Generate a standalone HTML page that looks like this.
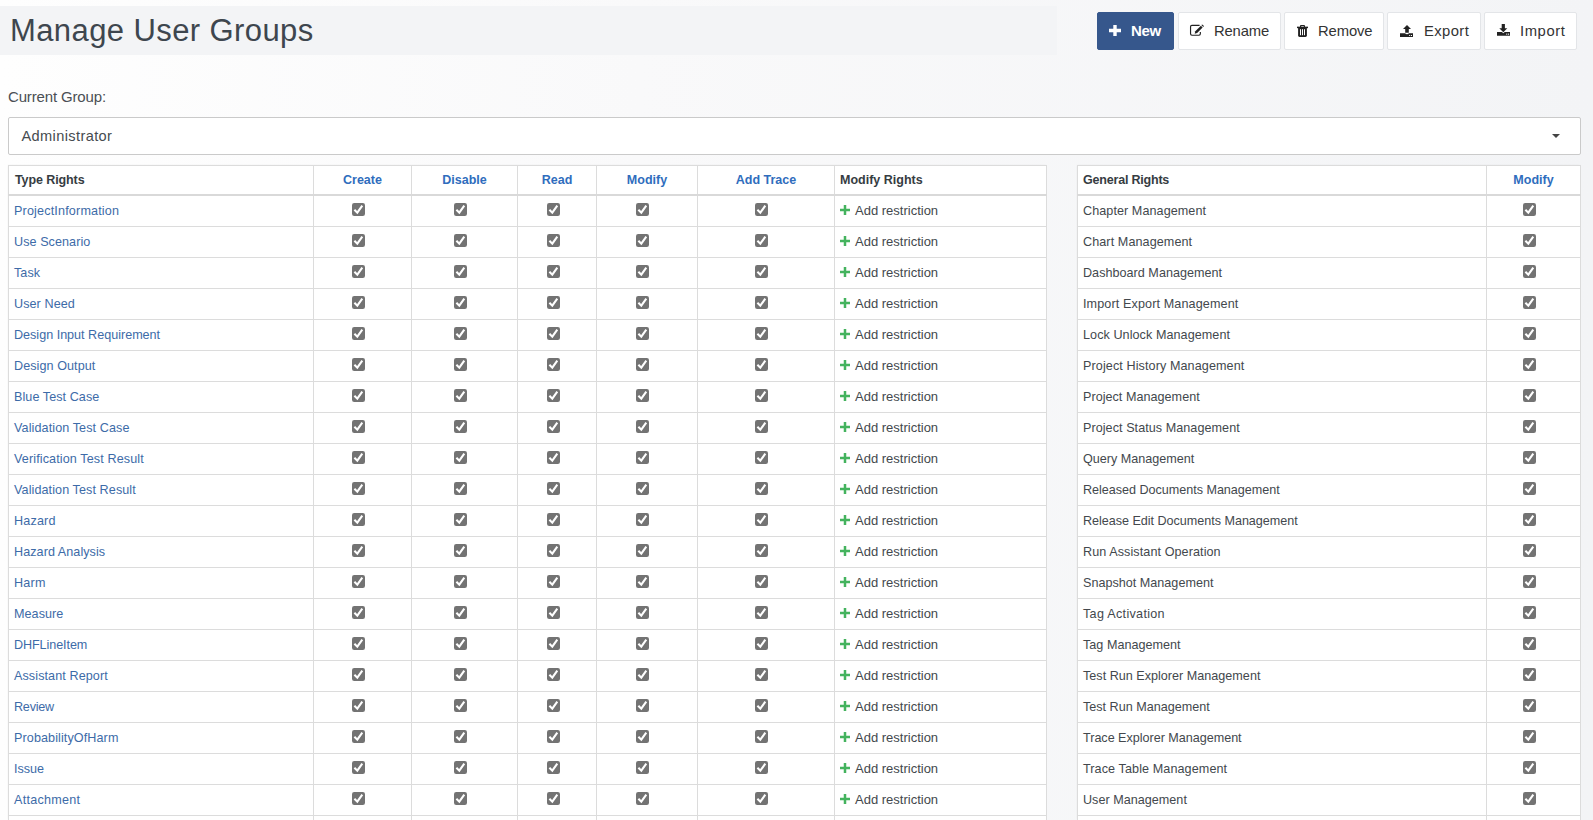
<!DOCTYPE html>
<html><head><meta charset="utf-8"><style>
html,body{margin:0;padding:0;}
body{width:1593px;height:820px;overflow:hidden;position:relative;font-family:"Liberation Sans",sans-serif;background:linear-gradient(to right,#fefefe 0%,#f9f9fa 40%,#f3f4f6 100%);}
.ab{position:absolute;line-height:0;}
.t{position:absolute;white-space:nowrap;line-height:20px;}
.bl{position:absolute;background:#dcdcdc;}
.bh{position:absolute;background:#d9d9d9;}
.tbg{position:absolute;background:#fff;box-shadow:0 0 2px rgba(0,0,0,0.05);}
.hd{font-size:12.5px;font-weight:bold;color:#363c42;}
.hl{font-size:12.5px;font-weight:bold;color:#2f6dbd;}
.lk{font-size:12.6px;color:#3d6ba8;}
.tx{font-size:12.6px;color:#43484d;}
.ar{font-size:13px;color:#43484d;}
.band{position:absolute;left:0;top:6px;width:1057px;height:49px;background:#f3f4f6;}
.title{position:absolute;left:10px;top:12px;font-size:31px;letter-spacing:0.4px;line-height:38px;color:#3e464e;white-space:nowrap;}
.btn{position:absolute;top:12px;height:36px;border:1px solid #e3e5e8;border-radius:2px;background:#fff;}
.btn .lb{position:absolute;top:9px;font-size:14.8px;line-height:18px;color:#333;white-space:nowrap;}
.btn .ic{position:absolute;line-height:0;}
.new{background:#36578c;border-color:#36578c;}
.lbl{position:absolute;left:8px;top:88px;font-size:15px;letter-spacing:-0.15px;line-height:18px;color:#4a4f54;white-space:nowrap;}
.sel{position:absolute;left:8px;top:117px;width:1571px;height:36px;border:1px solid #cacaca;border-radius:2px;background:#fff;}
.sel .v{position:absolute;left:12.5px;top:9px;font-size:14.6px;line-height:18px;color:#464b50;letter-spacing:0.37px;white-space:nowrap;}
.caret{position:absolute;left:1543px;top:16px;width:0;height:0;border-left:4px solid transparent;border-right:4px solid transparent;border-top:4px solid #444;}
</style></head><body>
<div class="band"></div>
<div class="title">Manage User Groups</div>
<div class="btn new" style="left:1097px;width:75px"><div class="ic" style="left:11px;top:12px"><svg width="12" height="11" viewBox="0 0 12 11"><path d="M4.3 0h3.4v3.8H12v3.4H7.7V11H4.3V7.2H0V3.8h4.3z" fill="#fff"/></svg></div><div class="lb" style="left:33px;color:#fff;font-weight:bold;font-size:15px;letter-spacing:-0.3px">New</div></div>
<div class="btn" style="left:1178px;width:101px"><div class="ic" style="left:6px;top:5px"><svg width="30" height="26" viewBox="0 0 30 26"><path d="M14.6 7.35H6.9Q5.55 7.35 5.55 8.7V15.85Q5.55 17.2 6.9 17.2H14Q15.35 17.2 15.35 15.85V14" stroke="#222" stroke-width="1.15" fill="none"/><path d="M9.7 15.7L10.3 13.2L15.9 7.7L17.6 9.4L12.1 15z" fill="#222"/><path d="M16.4 7.1L17.2 6.4L19 8.1L18.2 8.9z" fill="#222"/></svg></div><div class="lb" style="left:35px;letter-spacing:-0.150px">Rename</div></div>
<div class="btn" style="left:1284px;width:98px"><div class="ic" style="left:12px;top:12px"><svg width="12" height="12" viewBox="0 0 12 12"><path d="M0 2.4h11" stroke="#222" stroke-width="1.5"/><path d="M3.6 2.4V1.3Q3.6.4 4.5.4h2Q7.4.4 7.4 1.3v1.1" stroke="#222" stroke-width="1.2" fill="none"/><path d="M1.1 3h8.8v7.6Q9.9 12 8.5 12h-6Q1.1 12 1.1 10.6z" fill="#222"/><rect x="3" y="4.2" width="1" height="6" fill="#fff"/><rect x="5" y="4.2" width="1" height="6" fill="#fff"/><rect x="7" y="4.2" width="1" height="6" fill="#fff"/></svg></div><div class="lb" style="left:33px;letter-spacing:-0.100px">Remove</div></div>
<div class="btn" style="left:1387px;width:92px"><div class="ic" style="left:12px;top:12px"><svg width="14" height="13" viewBox="0 0 14 13"><path d="M7 0L11 4H8.8V7.8H5.2V4H3z" fill="#222"/><path d="M0 8.3H5.2V8.6Q7 9.8 8.8 8.6V8.3H13V12H0z" fill="#222"/><rect x="9.2" y="10" width="1" height="1" fill="#fff"/><rect x="11" y="10" width="1" height="1" fill="#fff"/></svg></div><div class="lb" style="left:36px;letter-spacing:0.400px">Export</div></div>
<div class="btn" style="left:1484px;width:91px"><div class="ic" style="left:12px;top:11px"><svg width="14" height="12" viewBox="0 0 14 12"><path d="M4.7 0H7.9V4.2H10.3L6.3 8.2 2.3 4.2H4.7z" fill="#222"/><path d="M0 8H4.9L6.3 9.2 7.7 8H13V11.8H0z" fill="#222"/><rect x="9.2" y="9.6" width="1.1" height="1.1" fill="#fff"/><rect x="11" y="9.6" width="1.1" height="1.1" fill="#fff"/></svg></div><div class="lb" style="left:35px;letter-spacing:0.580px">Import</div></div>
<div class="lbl">Current Group:</div>
<div class="sel"><div class="v">Administrator</div><div class="caret"></div></div>
<div class="tbg" style="left:8px;top:165px;width:1038px;height:655px"></div>
<div class="tbg" style="left:1077px;top:165px;width:503px;height:655px"></div>
<div class="bl" style="left:8px;top:165px;width:1px;height:655px"></div>
<div class="bl" style="left:313px;top:165px;width:1px;height:655px"></div>
<div class="bl" style="left:411px;top:165px;width:1px;height:655px"></div>
<div class="bl" style="left:517px;top:165px;width:1px;height:655px"></div>
<div class="bl" style="left:596px;top:165px;width:1px;height:655px"></div>
<div class="bl" style="left:697px;top:165px;width:1px;height:655px"></div>
<div class="bl" style="left:834px;top:165px;width:1px;height:655px"></div>
<div class="bl" style="left:1046px;top:165px;width:1px;height:655px"></div>
<div class="bl" style="left:1077px;top:165px;width:1px;height:655px"></div>
<div class="bl" style="left:1486px;top:165px;width:1px;height:655px"></div>
<div class="bl" style="left:1580px;top:165px;width:1px;height:655px"></div>
<div class="bl" style="left:8px;top:165px;width:1039px;height:1px"></div>
<div class="bl" style="left:1077px;top:165px;width:504px;height:1px"></div>
<div class="bh" style="left:8px;top:194px;width:1039px;height:2px"></div>
<div class="bh" style="left:1077px;top:194px;width:504px;height:2px"></div>
<div class="bl" style="left:8px;top:226px;width:1039px;height:1px"></div>
<div class="bl" style="left:1077px;top:226px;width:504px;height:1px"></div>
<div class="bl" style="left:8px;top:257px;width:1039px;height:1px"></div>
<div class="bl" style="left:1077px;top:257px;width:504px;height:1px"></div>
<div class="bl" style="left:8px;top:288px;width:1039px;height:1px"></div>
<div class="bl" style="left:1077px;top:288px;width:504px;height:1px"></div>
<div class="bl" style="left:8px;top:319px;width:1039px;height:1px"></div>
<div class="bl" style="left:1077px;top:319px;width:504px;height:1px"></div>
<div class="bl" style="left:8px;top:350px;width:1039px;height:1px"></div>
<div class="bl" style="left:1077px;top:350px;width:504px;height:1px"></div>
<div class="bl" style="left:8px;top:381px;width:1039px;height:1px"></div>
<div class="bl" style="left:1077px;top:381px;width:504px;height:1px"></div>
<div class="bl" style="left:8px;top:412px;width:1039px;height:1px"></div>
<div class="bl" style="left:1077px;top:412px;width:504px;height:1px"></div>
<div class="bl" style="left:8px;top:443px;width:1039px;height:1px"></div>
<div class="bl" style="left:1077px;top:443px;width:504px;height:1px"></div>
<div class="bl" style="left:8px;top:474px;width:1039px;height:1px"></div>
<div class="bl" style="left:1077px;top:474px;width:504px;height:1px"></div>
<div class="bl" style="left:8px;top:505px;width:1039px;height:1px"></div>
<div class="bl" style="left:1077px;top:505px;width:504px;height:1px"></div>
<div class="bl" style="left:8px;top:536px;width:1039px;height:1px"></div>
<div class="bl" style="left:1077px;top:536px;width:504px;height:1px"></div>
<div class="bl" style="left:8px;top:567px;width:1039px;height:1px"></div>
<div class="bl" style="left:1077px;top:567px;width:504px;height:1px"></div>
<div class="bl" style="left:8px;top:598px;width:1039px;height:1px"></div>
<div class="bl" style="left:1077px;top:598px;width:504px;height:1px"></div>
<div class="bl" style="left:8px;top:629px;width:1039px;height:1px"></div>
<div class="bl" style="left:1077px;top:629px;width:504px;height:1px"></div>
<div class="bl" style="left:8px;top:660px;width:1039px;height:1px"></div>
<div class="bl" style="left:1077px;top:660px;width:504px;height:1px"></div>
<div class="bl" style="left:8px;top:691px;width:1039px;height:1px"></div>
<div class="bl" style="left:1077px;top:691px;width:504px;height:1px"></div>
<div class="bl" style="left:8px;top:722px;width:1039px;height:1px"></div>
<div class="bl" style="left:1077px;top:722px;width:504px;height:1px"></div>
<div class="bl" style="left:8px;top:753px;width:1039px;height:1px"></div>
<div class="bl" style="left:1077px;top:753px;width:504px;height:1px"></div>
<div class="bl" style="left:8px;top:784px;width:1039px;height:1px"></div>
<div class="bl" style="left:1077px;top:784px;width:504px;height:1px"></div>
<div class="bl" style="left:8px;top:815px;width:1039px;height:1px"></div>
<div class="bl" style="left:1077px;top:815px;width:504px;height:1px"></div>
<div class="t hd" style="left:15px;top:170px"><span style='letter-spacing:-0.1px'>Type Rights</span></div>
<div class="t hl" style="left:314px;top:170px;width:97px;text-align:center">Create</div>
<div class="t hl" style="left:412px;top:170px;width:105px;text-align:center">Disable</div>
<div class="t hl" style="left:518px;top:170px;width:78px;text-align:center">Read</div>
<div class="t hl" style="left:597px;top:170px;width:100px;text-align:center">Modify</div>
<div class="t hl" style="left:698px;top:170px;width:136px;text-align:center">Add Trace</div>
<div class="t hd" style="left:840px;top:170px">Modify Rights</div>
<div class="t hd" style="left:1083px;top:170px"><span style='letter-spacing:-0.2px'>General Rights</span></div>
<div class="t hl" style="left:1487px;top:170px;width:93px;text-align:center">Modify</div>
<div class="t lk" style="left:14px;top:201px"><span style='letter-spacing:0.165px'>ProjectInformation</span></div>
<div class="ab" style="left:352px;top:203px"><svg class="cb" width="13" height="13" viewBox="0 0 13 13"><rect x="0" y="0" width="13" height="13" rx="2.2" fill="#737373"/><path d="M2.4 6.8 L5.3 9.7 L10.3 2.7" stroke="#fff" stroke-width="2.1" fill="none" stroke-linecap="butt" stroke-linejoin="miter"/></svg></div>
<div class="ab" style="left:454px;top:203px"><svg class="cb" width="13" height="13" viewBox="0 0 13 13"><rect x="0" y="0" width="13" height="13" rx="2.2" fill="#737373"/><path d="M2.4 6.8 L5.3 9.7 L10.3 2.7" stroke="#fff" stroke-width="2.1" fill="none" stroke-linecap="butt" stroke-linejoin="miter"/></svg></div>
<div class="ab" style="left:547px;top:203px"><svg class="cb" width="13" height="13" viewBox="0 0 13 13"><rect x="0" y="0" width="13" height="13" rx="2.2" fill="#737373"/><path d="M2.4 6.8 L5.3 9.7 L10.3 2.7" stroke="#fff" stroke-width="2.1" fill="none" stroke-linecap="butt" stroke-linejoin="miter"/></svg></div>
<div class="ab" style="left:636px;top:203px"><svg class="cb" width="13" height="13" viewBox="0 0 13 13"><rect x="0" y="0" width="13" height="13" rx="2.2" fill="#737373"/><path d="M2.4 6.8 L5.3 9.7 L10.3 2.7" stroke="#fff" stroke-width="2.1" fill="none" stroke-linecap="butt" stroke-linejoin="miter"/></svg></div>
<div class="ab" style="left:755px;top:203px"><svg class="cb" width="13" height="13" viewBox="0 0 13 13"><rect x="0" y="0" width="13" height="13" rx="2.2" fill="#737373"/><path d="M2.4 6.8 L5.3 9.7 L10.3 2.7" stroke="#fff" stroke-width="2.1" fill="none" stroke-linecap="butt" stroke-linejoin="miter"/></svg></div>
<div class="ab" style="left:840px;top:205px"><svg class="pl" width="10" height="10" viewBox="0 0 10 10"><path d="M3.75 0h2.5v3.75H10v2.5H6.25V10H3.75V6.25H0V3.75h3.75z" fill="#44b35e"/></svg></div>
<div class="t ar" style="left:855px;top:201px">Add restriction</div>
<div class="t tx" style="left:1083px;top:201px"><span style='letter-spacing:0.071px'>Chapter Management</span></div>
<div class="ab" style="left:1523px;top:203px"><svg class="cb" width="13" height="13" viewBox="0 0 13 13"><rect x="0" y="0" width="13" height="13" rx="2.2" fill="#737373"/><path d="M2.4 6.8 L5.3 9.7 L10.3 2.7" stroke="#fff" stroke-width="2.1" fill="none" stroke-linecap="butt" stroke-linejoin="miter"/></svg></div>
<div class="t lk" style="left:14px;top:232px"><span style='letter-spacing:0.064px'>Use Scenario</span></div>
<div class="ab" style="left:352px;top:234px"><svg class="cb" width="13" height="13" viewBox="0 0 13 13"><rect x="0" y="0" width="13" height="13" rx="2.2" fill="#737373"/><path d="M2.4 6.8 L5.3 9.7 L10.3 2.7" stroke="#fff" stroke-width="2.1" fill="none" stroke-linecap="butt" stroke-linejoin="miter"/></svg></div>
<div class="ab" style="left:454px;top:234px"><svg class="cb" width="13" height="13" viewBox="0 0 13 13"><rect x="0" y="0" width="13" height="13" rx="2.2" fill="#737373"/><path d="M2.4 6.8 L5.3 9.7 L10.3 2.7" stroke="#fff" stroke-width="2.1" fill="none" stroke-linecap="butt" stroke-linejoin="miter"/></svg></div>
<div class="ab" style="left:547px;top:234px"><svg class="cb" width="13" height="13" viewBox="0 0 13 13"><rect x="0" y="0" width="13" height="13" rx="2.2" fill="#737373"/><path d="M2.4 6.8 L5.3 9.7 L10.3 2.7" stroke="#fff" stroke-width="2.1" fill="none" stroke-linecap="butt" stroke-linejoin="miter"/></svg></div>
<div class="ab" style="left:636px;top:234px"><svg class="cb" width="13" height="13" viewBox="0 0 13 13"><rect x="0" y="0" width="13" height="13" rx="2.2" fill="#737373"/><path d="M2.4 6.8 L5.3 9.7 L10.3 2.7" stroke="#fff" stroke-width="2.1" fill="none" stroke-linecap="butt" stroke-linejoin="miter"/></svg></div>
<div class="ab" style="left:755px;top:234px"><svg class="cb" width="13" height="13" viewBox="0 0 13 13"><rect x="0" y="0" width="13" height="13" rx="2.2" fill="#737373"/><path d="M2.4 6.8 L5.3 9.7 L10.3 2.7" stroke="#fff" stroke-width="2.1" fill="none" stroke-linecap="butt" stroke-linejoin="miter"/></svg></div>
<div class="ab" style="left:840px;top:236px"><svg class="pl" width="10" height="10" viewBox="0 0 10 10"><path d="M3.75 0h2.5v3.75H10v2.5H6.25V10H3.75V6.25H0V3.75h3.75z" fill="#44b35e"/></svg></div>
<div class="t ar" style="left:855px;top:232px">Add restriction</div>
<div class="t tx" style="left:1083px;top:232px"><span style='letter-spacing:0.087px'>Chart Management</span></div>
<div class="ab" style="left:1523px;top:234px"><svg class="cb" width="13" height="13" viewBox="0 0 13 13"><rect x="0" y="0" width="13" height="13" rx="2.2" fill="#737373"/><path d="M2.4 6.8 L5.3 9.7 L10.3 2.7" stroke="#fff" stroke-width="2.1" fill="none" stroke-linecap="butt" stroke-linejoin="miter"/></svg></div>
<div class="t lk" style="left:14px;top:263px"><span style='letter-spacing:0.067px'>Task</span></div>
<div class="ab" style="left:352px;top:265px"><svg class="cb" width="13" height="13" viewBox="0 0 13 13"><rect x="0" y="0" width="13" height="13" rx="2.2" fill="#737373"/><path d="M2.4 6.8 L5.3 9.7 L10.3 2.7" stroke="#fff" stroke-width="2.1" fill="none" stroke-linecap="butt" stroke-linejoin="miter"/></svg></div>
<div class="ab" style="left:454px;top:265px"><svg class="cb" width="13" height="13" viewBox="0 0 13 13"><rect x="0" y="0" width="13" height="13" rx="2.2" fill="#737373"/><path d="M2.4 6.8 L5.3 9.7 L10.3 2.7" stroke="#fff" stroke-width="2.1" fill="none" stroke-linecap="butt" stroke-linejoin="miter"/></svg></div>
<div class="ab" style="left:547px;top:265px"><svg class="cb" width="13" height="13" viewBox="0 0 13 13"><rect x="0" y="0" width="13" height="13" rx="2.2" fill="#737373"/><path d="M2.4 6.8 L5.3 9.7 L10.3 2.7" stroke="#fff" stroke-width="2.1" fill="none" stroke-linecap="butt" stroke-linejoin="miter"/></svg></div>
<div class="ab" style="left:636px;top:265px"><svg class="cb" width="13" height="13" viewBox="0 0 13 13"><rect x="0" y="0" width="13" height="13" rx="2.2" fill="#737373"/><path d="M2.4 6.8 L5.3 9.7 L10.3 2.7" stroke="#fff" stroke-width="2.1" fill="none" stroke-linecap="butt" stroke-linejoin="miter"/></svg></div>
<div class="ab" style="left:755px;top:265px"><svg class="cb" width="13" height="13" viewBox="0 0 13 13"><rect x="0" y="0" width="13" height="13" rx="2.2" fill="#737373"/><path d="M2.4 6.8 L5.3 9.7 L10.3 2.7" stroke="#fff" stroke-width="2.1" fill="none" stroke-linecap="butt" stroke-linejoin="miter"/></svg></div>
<div class="ab" style="left:840px;top:267px"><svg class="pl" width="10" height="10" viewBox="0 0 10 10"><path d="M3.75 0h2.5v3.75H10v2.5H6.25V10H3.75V6.25H0V3.75h3.75z" fill="#44b35e"/></svg></div>
<div class="t ar" style="left:855px;top:263px">Add restriction</div>
<div class="t tx" style="left:1083px;top:263px"><span style='letter-spacing:0.026px'>Dashboard Management</span></div>
<div class="ab" style="left:1523px;top:265px"><svg class="cb" width="13" height="13" viewBox="0 0 13 13"><rect x="0" y="0" width="13" height="13" rx="2.2" fill="#737373"/><path d="M2.4 6.8 L5.3 9.7 L10.3 2.7" stroke="#fff" stroke-width="2.1" fill="none" stroke-linecap="butt" stroke-linejoin="miter"/></svg></div>
<div class="t lk" style="left:14px;top:294px"><span style='letter-spacing:0.075px'>User Need</span></div>
<div class="ab" style="left:352px;top:296px"><svg class="cb" width="13" height="13" viewBox="0 0 13 13"><rect x="0" y="0" width="13" height="13" rx="2.2" fill="#737373"/><path d="M2.4 6.8 L5.3 9.7 L10.3 2.7" stroke="#fff" stroke-width="2.1" fill="none" stroke-linecap="butt" stroke-linejoin="miter"/></svg></div>
<div class="ab" style="left:454px;top:296px"><svg class="cb" width="13" height="13" viewBox="0 0 13 13"><rect x="0" y="0" width="13" height="13" rx="2.2" fill="#737373"/><path d="M2.4 6.8 L5.3 9.7 L10.3 2.7" stroke="#fff" stroke-width="2.1" fill="none" stroke-linecap="butt" stroke-linejoin="miter"/></svg></div>
<div class="ab" style="left:547px;top:296px"><svg class="cb" width="13" height="13" viewBox="0 0 13 13"><rect x="0" y="0" width="13" height="13" rx="2.2" fill="#737373"/><path d="M2.4 6.8 L5.3 9.7 L10.3 2.7" stroke="#fff" stroke-width="2.1" fill="none" stroke-linecap="butt" stroke-linejoin="miter"/></svg></div>
<div class="ab" style="left:636px;top:296px"><svg class="cb" width="13" height="13" viewBox="0 0 13 13"><rect x="0" y="0" width="13" height="13" rx="2.2" fill="#737373"/><path d="M2.4 6.8 L5.3 9.7 L10.3 2.7" stroke="#fff" stroke-width="2.1" fill="none" stroke-linecap="butt" stroke-linejoin="miter"/></svg></div>
<div class="ab" style="left:755px;top:296px"><svg class="cb" width="13" height="13" viewBox="0 0 13 13"><rect x="0" y="0" width="13" height="13" rx="2.2" fill="#737373"/><path d="M2.4 6.8 L5.3 9.7 L10.3 2.7" stroke="#fff" stroke-width="2.1" fill="none" stroke-linecap="butt" stroke-linejoin="miter"/></svg></div>
<div class="ab" style="left:840px;top:298px"><svg class="pl" width="10" height="10" viewBox="0 0 10 10"><path d="M3.75 0h2.5v3.75H10v2.5H6.25V10H3.75V6.25H0V3.75h3.75z" fill="#44b35e"/></svg></div>
<div class="t ar" style="left:855px;top:294px">Add restriction</div>
<div class="t tx" style="left:1083px;top:294px"><span style='letter-spacing:0.117px'>Import Export Management</span></div>
<div class="ab" style="left:1523px;top:296px"><svg class="cb" width="13" height="13" viewBox="0 0 13 13"><rect x="0" y="0" width="13" height="13" rx="2.2" fill="#737373"/><path d="M2.4 6.8 L5.3 9.7 L10.3 2.7" stroke="#fff" stroke-width="2.1" fill="none" stroke-linecap="butt" stroke-linejoin="miter"/></svg></div>
<div class="t lk" style="left:14px;top:325px"><span style='letter-spacing:-0.009px'>Design Input Requirement</span></div>
<div class="ab" style="left:352px;top:327px"><svg class="cb" width="13" height="13" viewBox="0 0 13 13"><rect x="0" y="0" width="13" height="13" rx="2.2" fill="#737373"/><path d="M2.4 6.8 L5.3 9.7 L10.3 2.7" stroke="#fff" stroke-width="2.1" fill="none" stroke-linecap="butt" stroke-linejoin="miter"/></svg></div>
<div class="ab" style="left:454px;top:327px"><svg class="cb" width="13" height="13" viewBox="0 0 13 13"><rect x="0" y="0" width="13" height="13" rx="2.2" fill="#737373"/><path d="M2.4 6.8 L5.3 9.7 L10.3 2.7" stroke="#fff" stroke-width="2.1" fill="none" stroke-linecap="butt" stroke-linejoin="miter"/></svg></div>
<div class="ab" style="left:547px;top:327px"><svg class="cb" width="13" height="13" viewBox="0 0 13 13"><rect x="0" y="0" width="13" height="13" rx="2.2" fill="#737373"/><path d="M2.4 6.8 L5.3 9.7 L10.3 2.7" stroke="#fff" stroke-width="2.1" fill="none" stroke-linecap="butt" stroke-linejoin="miter"/></svg></div>
<div class="ab" style="left:636px;top:327px"><svg class="cb" width="13" height="13" viewBox="0 0 13 13"><rect x="0" y="0" width="13" height="13" rx="2.2" fill="#737373"/><path d="M2.4 6.8 L5.3 9.7 L10.3 2.7" stroke="#fff" stroke-width="2.1" fill="none" stroke-linecap="butt" stroke-linejoin="miter"/></svg></div>
<div class="ab" style="left:755px;top:327px"><svg class="cb" width="13" height="13" viewBox="0 0 13 13"><rect x="0" y="0" width="13" height="13" rx="2.2" fill="#737373"/><path d="M2.4 6.8 L5.3 9.7 L10.3 2.7" stroke="#fff" stroke-width="2.1" fill="none" stroke-linecap="butt" stroke-linejoin="miter"/></svg></div>
<div class="ab" style="left:840px;top:329px"><svg class="pl" width="10" height="10" viewBox="0 0 10 10"><path d="M3.75 0h2.5v3.75H10v2.5H6.25V10H3.75V6.25H0V3.75h3.75z" fill="#44b35e"/></svg></div>
<div class="t ar" style="left:855px;top:325px">Add restriction</div>
<div class="t tx" style="left:1083px;top:325px"><span style='letter-spacing:0.067px'>Lock Unlock Management</span></div>
<div class="ab" style="left:1523px;top:327px"><svg class="cb" width="13" height="13" viewBox="0 0 13 13"><rect x="0" y="0" width="13" height="13" rx="2.2" fill="#737373"/><path d="M2.4 6.8 L5.3 9.7 L10.3 2.7" stroke="#fff" stroke-width="2.1" fill="none" stroke-linecap="butt" stroke-linejoin="miter"/></svg></div>
<div class="t lk" style="left:14px;top:356px"><span style='letter-spacing:0.067px'>Design Output</span></div>
<div class="ab" style="left:352px;top:358px"><svg class="cb" width="13" height="13" viewBox="0 0 13 13"><rect x="0" y="0" width="13" height="13" rx="2.2" fill="#737373"/><path d="M2.4 6.8 L5.3 9.7 L10.3 2.7" stroke="#fff" stroke-width="2.1" fill="none" stroke-linecap="butt" stroke-linejoin="miter"/></svg></div>
<div class="ab" style="left:454px;top:358px"><svg class="cb" width="13" height="13" viewBox="0 0 13 13"><rect x="0" y="0" width="13" height="13" rx="2.2" fill="#737373"/><path d="M2.4 6.8 L5.3 9.7 L10.3 2.7" stroke="#fff" stroke-width="2.1" fill="none" stroke-linecap="butt" stroke-linejoin="miter"/></svg></div>
<div class="ab" style="left:547px;top:358px"><svg class="cb" width="13" height="13" viewBox="0 0 13 13"><rect x="0" y="0" width="13" height="13" rx="2.2" fill="#737373"/><path d="M2.4 6.8 L5.3 9.7 L10.3 2.7" stroke="#fff" stroke-width="2.1" fill="none" stroke-linecap="butt" stroke-linejoin="miter"/></svg></div>
<div class="ab" style="left:636px;top:358px"><svg class="cb" width="13" height="13" viewBox="0 0 13 13"><rect x="0" y="0" width="13" height="13" rx="2.2" fill="#737373"/><path d="M2.4 6.8 L5.3 9.7 L10.3 2.7" stroke="#fff" stroke-width="2.1" fill="none" stroke-linecap="butt" stroke-linejoin="miter"/></svg></div>
<div class="ab" style="left:755px;top:358px"><svg class="cb" width="13" height="13" viewBox="0 0 13 13"><rect x="0" y="0" width="13" height="13" rx="2.2" fill="#737373"/><path d="M2.4 6.8 L5.3 9.7 L10.3 2.7" stroke="#fff" stroke-width="2.1" fill="none" stroke-linecap="butt" stroke-linejoin="miter"/></svg></div>
<div class="ab" style="left:840px;top:360px"><svg class="pl" width="10" height="10" viewBox="0 0 10 10"><path d="M3.75 0h2.5v3.75H10v2.5H6.25V10H3.75V6.25H0V3.75h3.75z" fill="#44b35e"/></svg></div>
<div class="t ar" style="left:855px;top:356px">Add restriction</div>
<div class="t tx" style="left:1083px;top:356px"><span style='letter-spacing:0.096px'>Project History Management</span></div>
<div class="ab" style="left:1523px;top:358px"><svg class="cb" width="13" height="13" viewBox="0 0 13 13"><rect x="0" y="0" width="13" height="13" rx="2.2" fill="#737373"/><path d="M2.4 6.8 L5.3 9.7 L10.3 2.7" stroke="#fff" stroke-width="2.1" fill="none" stroke-linecap="butt" stroke-linejoin="miter"/></svg></div>
<div class="t lk" style="left:14px;top:387px"><span style='letter-spacing:0.062px'>Blue Test Case</span></div>
<div class="ab" style="left:352px;top:389px"><svg class="cb" width="13" height="13" viewBox="0 0 13 13"><rect x="0" y="0" width="13" height="13" rx="2.2" fill="#737373"/><path d="M2.4 6.8 L5.3 9.7 L10.3 2.7" stroke="#fff" stroke-width="2.1" fill="none" stroke-linecap="butt" stroke-linejoin="miter"/></svg></div>
<div class="ab" style="left:454px;top:389px"><svg class="cb" width="13" height="13" viewBox="0 0 13 13"><rect x="0" y="0" width="13" height="13" rx="2.2" fill="#737373"/><path d="M2.4 6.8 L5.3 9.7 L10.3 2.7" stroke="#fff" stroke-width="2.1" fill="none" stroke-linecap="butt" stroke-linejoin="miter"/></svg></div>
<div class="ab" style="left:547px;top:389px"><svg class="cb" width="13" height="13" viewBox="0 0 13 13"><rect x="0" y="0" width="13" height="13" rx="2.2" fill="#737373"/><path d="M2.4 6.8 L5.3 9.7 L10.3 2.7" stroke="#fff" stroke-width="2.1" fill="none" stroke-linecap="butt" stroke-linejoin="miter"/></svg></div>
<div class="ab" style="left:636px;top:389px"><svg class="cb" width="13" height="13" viewBox="0 0 13 13"><rect x="0" y="0" width="13" height="13" rx="2.2" fill="#737373"/><path d="M2.4 6.8 L5.3 9.7 L10.3 2.7" stroke="#fff" stroke-width="2.1" fill="none" stroke-linecap="butt" stroke-linejoin="miter"/></svg></div>
<div class="ab" style="left:755px;top:389px"><svg class="cb" width="13" height="13" viewBox="0 0 13 13"><rect x="0" y="0" width="13" height="13" rx="2.2" fill="#737373"/><path d="M2.4 6.8 L5.3 9.7 L10.3 2.7" stroke="#fff" stroke-width="2.1" fill="none" stroke-linecap="butt" stroke-linejoin="miter"/></svg></div>
<div class="ab" style="left:840px;top:391px"><svg class="pl" width="10" height="10" viewBox="0 0 10 10"><path d="M3.75 0h2.5v3.75H10v2.5H6.25V10H3.75V6.25H0V3.75h3.75z" fill="#44b35e"/></svg></div>
<div class="t ar" style="left:855px;top:387px">Add restriction</div>
<div class="t tx" style="left:1083px;top:387px"><span style='letter-spacing:0.029px'>Project Management</span></div>
<div class="ab" style="left:1523px;top:389px"><svg class="cb" width="13" height="13" viewBox="0 0 13 13"><rect x="0" y="0" width="13" height="13" rx="2.2" fill="#737373"/><path d="M2.4 6.8 L5.3 9.7 L10.3 2.7" stroke="#fff" stroke-width="2.1" fill="none" stroke-linecap="butt" stroke-linejoin="miter"/></svg></div>
<div class="t lk" style="left:14px;top:418px"><span style='letter-spacing:0.095px'>Validation Test Case</span></div>
<div class="ab" style="left:352px;top:420px"><svg class="cb" width="13" height="13" viewBox="0 0 13 13"><rect x="0" y="0" width="13" height="13" rx="2.2" fill="#737373"/><path d="M2.4 6.8 L5.3 9.7 L10.3 2.7" stroke="#fff" stroke-width="2.1" fill="none" stroke-linecap="butt" stroke-linejoin="miter"/></svg></div>
<div class="ab" style="left:454px;top:420px"><svg class="cb" width="13" height="13" viewBox="0 0 13 13"><rect x="0" y="0" width="13" height="13" rx="2.2" fill="#737373"/><path d="M2.4 6.8 L5.3 9.7 L10.3 2.7" stroke="#fff" stroke-width="2.1" fill="none" stroke-linecap="butt" stroke-linejoin="miter"/></svg></div>
<div class="ab" style="left:547px;top:420px"><svg class="cb" width="13" height="13" viewBox="0 0 13 13"><rect x="0" y="0" width="13" height="13" rx="2.2" fill="#737373"/><path d="M2.4 6.8 L5.3 9.7 L10.3 2.7" stroke="#fff" stroke-width="2.1" fill="none" stroke-linecap="butt" stroke-linejoin="miter"/></svg></div>
<div class="ab" style="left:636px;top:420px"><svg class="cb" width="13" height="13" viewBox="0 0 13 13"><rect x="0" y="0" width="13" height="13" rx="2.2" fill="#737373"/><path d="M2.4 6.8 L5.3 9.7 L10.3 2.7" stroke="#fff" stroke-width="2.1" fill="none" stroke-linecap="butt" stroke-linejoin="miter"/></svg></div>
<div class="ab" style="left:755px;top:420px"><svg class="cb" width="13" height="13" viewBox="0 0 13 13"><rect x="0" y="0" width="13" height="13" rx="2.2" fill="#737373"/><path d="M2.4 6.8 L5.3 9.7 L10.3 2.7" stroke="#fff" stroke-width="2.1" fill="none" stroke-linecap="butt" stroke-linejoin="miter"/></svg></div>
<div class="ab" style="left:840px;top:422px"><svg class="pl" width="10" height="10" viewBox="0 0 10 10"><path d="M3.75 0h2.5v3.75H10v2.5H6.25V10H3.75V6.25H0V3.75h3.75z" fill="#44b35e"/></svg></div>
<div class="t ar" style="left:855px;top:418px">Add restriction</div>
<div class="t tx" style="left:1083px;top:418px"><span style='letter-spacing:0.054px'>Project Status Management</span></div>
<div class="ab" style="left:1523px;top:420px"><svg class="cb" width="13" height="13" viewBox="0 0 13 13"><rect x="0" y="0" width="13" height="13" rx="2.2" fill="#737373"/><path d="M2.4 6.8 L5.3 9.7 L10.3 2.7" stroke="#fff" stroke-width="2.1" fill="none" stroke-linecap="butt" stroke-linejoin="miter"/></svg></div>
<div class="t lk" style="left:14px;top:449px"><span style='letter-spacing:0.109px'>Verification Test Result</span></div>
<div class="ab" style="left:352px;top:451px"><svg class="cb" width="13" height="13" viewBox="0 0 13 13"><rect x="0" y="0" width="13" height="13" rx="2.2" fill="#737373"/><path d="M2.4 6.8 L5.3 9.7 L10.3 2.7" stroke="#fff" stroke-width="2.1" fill="none" stroke-linecap="butt" stroke-linejoin="miter"/></svg></div>
<div class="ab" style="left:454px;top:451px"><svg class="cb" width="13" height="13" viewBox="0 0 13 13"><rect x="0" y="0" width="13" height="13" rx="2.2" fill="#737373"/><path d="M2.4 6.8 L5.3 9.7 L10.3 2.7" stroke="#fff" stroke-width="2.1" fill="none" stroke-linecap="butt" stroke-linejoin="miter"/></svg></div>
<div class="ab" style="left:547px;top:451px"><svg class="cb" width="13" height="13" viewBox="0 0 13 13"><rect x="0" y="0" width="13" height="13" rx="2.2" fill="#737373"/><path d="M2.4 6.8 L5.3 9.7 L10.3 2.7" stroke="#fff" stroke-width="2.1" fill="none" stroke-linecap="butt" stroke-linejoin="miter"/></svg></div>
<div class="ab" style="left:636px;top:451px"><svg class="cb" width="13" height="13" viewBox="0 0 13 13"><rect x="0" y="0" width="13" height="13" rx="2.2" fill="#737373"/><path d="M2.4 6.8 L5.3 9.7 L10.3 2.7" stroke="#fff" stroke-width="2.1" fill="none" stroke-linecap="butt" stroke-linejoin="miter"/></svg></div>
<div class="ab" style="left:755px;top:451px"><svg class="cb" width="13" height="13" viewBox="0 0 13 13"><rect x="0" y="0" width="13" height="13" rx="2.2" fill="#737373"/><path d="M2.4 6.8 L5.3 9.7 L10.3 2.7" stroke="#fff" stroke-width="2.1" fill="none" stroke-linecap="butt" stroke-linejoin="miter"/></svg></div>
<div class="ab" style="left:840px;top:453px"><svg class="pl" width="10" height="10" viewBox="0 0 10 10"><path d="M3.75 0h2.5v3.75H10v2.5H6.25V10H3.75V6.25H0V3.75h3.75z" fill="#44b35e"/></svg></div>
<div class="t ar" style="left:855px;top:449px">Add restriction</div>
<div class="t tx" style="left:1083px;top:449px"><span style='letter-spacing:-0.007px'>Query Management</span></div>
<div class="ab" style="left:1523px;top:451px"><svg class="cb" width="13" height="13" viewBox="0 0 13 13"><rect x="0" y="0" width="13" height="13" rx="2.2" fill="#737373"/><path d="M2.4 6.8 L5.3 9.7 L10.3 2.7" stroke="#fff" stroke-width="2.1" fill="none" stroke-linecap="butt" stroke-linejoin="miter"/></svg></div>
<div class="t lk" style="left:14px;top:480px"><span style='letter-spacing:0.086px'>Validation Test Result</span></div>
<div class="ab" style="left:352px;top:482px"><svg class="cb" width="13" height="13" viewBox="0 0 13 13"><rect x="0" y="0" width="13" height="13" rx="2.2" fill="#737373"/><path d="M2.4 6.8 L5.3 9.7 L10.3 2.7" stroke="#fff" stroke-width="2.1" fill="none" stroke-linecap="butt" stroke-linejoin="miter"/></svg></div>
<div class="ab" style="left:454px;top:482px"><svg class="cb" width="13" height="13" viewBox="0 0 13 13"><rect x="0" y="0" width="13" height="13" rx="2.2" fill="#737373"/><path d="M2.4 6.8 L5.3 9.7 L10.3 2.7" stroke="#fff" stroke-width="2.1" fill="none" stroke-linecap="butt" stroke-linejoin="miter"/></svg></div>
<div class="ab" style="left:547px;top:482px"><svg class="cb" width="13" height="13" viewBox="0 0 13 13"><rect x="0" y="0" width="13" height="13" rx="2.2" fill="#737373"/><path d="M2.4 6.8 L5.3 9.7 L10.3 2.7" stroke="#fff" stroke-width="2.1" fill="none" stroke-linecap="butt" stroke-linejoin="miter"/></svg></div>
<div class="ab" style="left:636px;top:482px"><svg class="cb" width="13" height="13" viewBox="0 0 13 13"><rect x="0" y="0" width="13" height="13" rx="2.2" fill="#737373"/><path d="M2.4 6.8 L5.3 9.7 L10.3 2.7" stroke="#fff" stroke-width="2.1" fill="none" stroke-linecap="butt" stroke-linejoin="miter"/></svg></div>
<div class="ab" style="left:755px;top:482px"><svg class="cb" width="13" height="13" viewBox="0 0 13 13"><rect x="0" y="0" width="13" height="13" rx="2.2" fill="#737373"/><path d="M2.4 6.8 L5.3 9.7 L10.3 2.7" stroke="#fff" stroke-width="2.1" fill="none" stroke-linecap="butt" stroke-linejoin="miter"/></svg></div>
<div class="ab" style="left:840px;top:484px"><svg class="pl" width="10" height="10" viewBox="0 0 10 10"><path d="M3.75 0h2.5v3.75H10v2.5H6.25V10H3.75V6.25H0V3.75h3.75z" fill="#44b35e"/></svg></div>
<div class="t ar" style="left:855px;top:480px">Add restriction</div>
<div class="t tx" style="left:1083px;top:480px"><span style='letter-spacing:-0.025px'>Released Documents Management</span></div>
<div class="ab" style="left:1523px;top:482px"><svg class="cb" width="13" height="13" viewBox="0 0 13 13"><rect x="0" y="0" width="13" height="13" rx="2.2" fill="#737373"/><path d="M2.4 6.8 L5.3 9.7 L10.3 2.7" stroke="#fff" stroke-width="2.1" fill="none" stroke-linecap="butt" stroke-linejoin="miter"/></svg></div>
<div class="t lk" style="left:14px;top:511px"><span style='letter-spacing:0.180px'>Hazard</span></div>
<div class="ab" style="left:352px;top:513px"><svg class="cb" width="13" height="13" viewBox="0 0 13 13"><rect x="0" y="0" width="13" height="13" rx="2.2" fill="#737373"/><path d="M2.4 6.8 L5.3 9.7 L10.3 2.7" stroke="#fff" stroke-width="2.1" fill="none" stroke-linecap="butt" stroke-linejoin="miter"/></svg></div>
<div class="ab" style="left:454px;top:513px"><svg class="cb" width="13" height="13" viewBox="0 0 13 13"><rect x="0" y="0" width="13" height="13" rx="2.2" fill="#737373"/><path d="M2.4 6.8 L5.3 9.7 L10.3 2.7" stroke="#fff" stroke-width="2.1" fill="none" stroke-linecap="butt" stroke-linejoin="miter"/></svg></div>
<div class="ab" style="left:547px;top:513px"><svg class="cb" width="13" height="13" viewBox="0 0 13 13"><rect x="0" y="0" width="13" height="13" rx="2.2" fill="#737373"/><path d="M2.4 6.8 L5.3 9.7 L10.3 2.7" stroke="#fff" stroke-width="2.1" fill="none" stroke-linecap="butt" stroke-linejoin="miter"/></svg></div>
<div class="ab" style="left:636px;top:513px"><svg class="cb" width="13" height="13" viewBox="0 0 13 13"><rect x="0" y="0" width="13" height="13" rx="2.2" fill="#737373"/><path d="M2.4 6.8 L5.3 9.7 L10.3 2.7" stroke="#fff" stroke-width="2.1" fill="none" stroke-linecap="butt" stroke-linejoin="miter"/></svg></div>
<div class="ab" style="left:755px;top:513px"><svg class="cb" width="13" height="13" viewBox="0 0 13 13"><rect x="0" y="0" width="13" height="13" rx="2.2" fill="#737373"/><path d="M2.4 6.8 L5.3 9.7 L10.3 2.7" stroke="#fff" stroke-width="2.1" fill="none" stroke-linecap="butt" stroke-linejoin="miter"/></svg></div>
<div class="ab" style="left:840px;top:515px"><svg class="pl" width="10" height="10" viewBox="0 0 10 10"><path d="M3.75 0h2.5v3.75H10v2.5H6.25V10H3.75V6.25H0V3.75h3.75z" fill="#44b35e"/></svg></div>
<div class="t ar" style="left:855px;top:511px">Add restriction</div>
<div class="t tx" style="left:1083px;top:511px"><span style='letter-spacing:-0.028px'>Release Edit Documents Management</span></div>
<div class="ab" style="left:1523px;top:513px"><svg class="cb" width="13" height="13" viewBox="0 0 13 13"><rect x="0" y="0" width="13" height="13" rx="2.2" fill="#737373"/><path d="M2.4 6.8 L5.3 9.7 L10.3 2.7" stroke="#fff" stroke-width="2.1" fill="none" stroke-linecap="butt" stroke-linejoin="miter"/></svg></div>
<div class="t lk" style="left:14px;top:542px"><span style='letter-spacing:0.057px'>Hazard Analysis</span></div>
<div class="ab" style="left:352px;top:544px"><svg class="cb" width="13" height="13" viewBox="0 0 13 13"><rect x="0" y="0" width="13" height="13" rx="2.2" fill="#737373"/><path d="M2.4 6.8 L5.3 9.7 L10.3 2.7" stroke="#fff" stroke-width="2.1" fill="none" stroke-linecap="butt" stroke-linejoin="miter"/></svg></div>
<div class="ab" style="left:454px;top:544px"><svg class="cb" width="13" height="13" viewBox="0 0 13 13"><rect x="0" y="0" width="13" height="13" rx="2.2" fill="#737373"/><path d="M2.4 6.8 L5.3 9.7 L10.3 2.7" stroke="#fff" stroke-width="2.1" fill="none" stroke-linecap="butt" stroke-linejoin="miter"/></svg></div>
<div class="ab" style="left:547px;top:544px"><svg class="cb" width="13" height="13" viewBox="0 0 13 13"><rect x="0" y="0" width="13" height="13" rx="2.2" fill="#737373"/><path d="M2.4 6.8 L5.3 9.7 L10.3 2.7" stroke="#fff" stroke-width="2.1" fill="none" stroke-linecap="butt" stroke-linejoin="miter"/></svg></div>
<div class="ab" style="left:636px;top:544px"><svg class="cb" width="13" height="13" viewBox="0 0 13 13"><rect x="0" y="0" width="13" height="13" rx="2.2" fill="#737373"/><path d="M2.4 6.8 L5.3 9.7 L10.3 2.7" stroke="#fff" stroke-width="2.1" fill="none" stroke-linecap="butt" stroke-linejoin="miter"/></svg></div>
<div class="ab" style="left:755px;top:544px"><svg class="cb" width="13" height="13" viewBox="0 0 13 13"><rect x="0" y="0" width="13" height="13" rx="2.2" fill="#737373"/><path d="M2.4 6.8 L5.3 9.7 L10.3 2.7" stroke="#fff" stroke-width="2.1" fill="none" stroke-linecap="butt" stroke-linejoin="miter"/></svg></div>
<div class="ab" style="left:840px;top:546px"><svg class="pl" width="10" height="10" viewBox="0 0 10 10"><path d="M3.75 0h2.5v3.75H10v2.5H6.25V10H3.75V6.25H0V3.75h3.75z" fill="#44b35e"/></svg></div>
<div class="t ar" style="left:855px;top:542px">Add restriction</div>
<div class="t tx" style="left:1083px;top:542px"><span style='letter-spacing:0.082px'>Run Assistant Operation</span></div>
<div class="ab" style="left:1523px;top:544px"><svg class="cb" width="13" height="13" viewBox="0 0 13 13"><rect x="0" y="0" width="13" height="13" rx="2.2" fill="#737373"/><path d="M2.4 6.8 L5.3 9.7 L10.3 2.7" stroke="#fff" stroke-width="2.1" fill="none" stroke-linecap="butt" stroke-linejoin="miter"/></svg></div>
<div class="t lk" style="left:14px;top:573px"><span style='letter-spacing:0.233px'>Harm</span></div>
<div class="ab" style="left:352px;top:575px"><svg class="cb" width="13" height="13" viewBox="0 0 13 13"><rect x="0" y="0" width="13" height="13" rx="2.2" fill="#737373"/><path d="M2.4 6.8 L5.3 9.7 L10.3 2.7" stroke="#fff" stroke-width="2.1" fill="none" stroke-linecap="butt" stroke-linejoin="miter"/></svg></div>
<div class="ab" style="left:454px;top:575px"><svg class="cb" width="13" height="13" viewBox="0 0 13 13"><rect x="0" y="0" width="13" height="13" rx="2.2" fill="#737373"/><path d="M2.4 6.8 L5.3 9.7 L10.3 2.7" stroke="#fff" stroke-width="2.1" fill="none" stroke-linecap="butt" stroke-linejoin="miter"/></svg></div>
<div class="ab" style="left:547px;top:575px"><svg class="cb" width="13" height="13" viewBox="0 0 13 13"><rect x="0" y="0" width="13" height="13" rx="2.2" fill="#737373"/><path d="M2.4 6.8 L5.3 9.7 L10.3 2.7" stroke="#fff" stroke-width="2.1" fill="none" stroke-linecap="butt" stroke-linejoin="miter"/></svg></div>
<div class="ab" style="left:636px;top:575px"><svg class="cb" width="13" height="13" viewBox="0 0 13 13"><rect x="0" y="0" width="13" height="13" rx="2.2" fill="#737373"/><path d="M2.4 6.8 L5.3 9.7 L10.3 2.7" stroke="#fff" stroke-width="2.1" fill="none" stroke-linecap="butt" stroke-linejoin="miter"/></svg></div>
<div class="ab" style="left:755px;top:575px"><svg class="cb" width="13" height="13" viewBox="0 0 13 13"><rect x="0" y="0" width="13" height="13" rx="2.2" fill="#737373"/><path d="M2.4 6.8 L5.3 9.7 L10.3 2.7" stroke="#fff" stroke-width="2.1" fill="none" stroke-linecap="butt" stroke-linejoin="miter"/></svg></div>
<div class="ab" style="left:840px;top:577px"><svg class="pl" width="10" height="10" viewBox="0 0 10 10"><path d="M3.75 0h2.5v3.75H10v2.5H6.25V10H3.75V6.25H0V3.75h3.75z" fill="#44b35e"/></svg></div>
<div class="t ar" style="left:855px;top:573px">Add restriction</div>
<div class="t tx" style="left:1083px;top:573px"><span style='letter-spacing:0.011px'>Snapshot Management</span></div>
<div class="ab" style="left:1523px;top:575px"><svg class="cb" width="13" height="13" viewBox="0 0 13 13"><rect x="0" y="0" width="13" height="13" rx="2.2" fill="#737373"/><path d="M2.4 6.8 L5.3 9.7 L10.3 2.7" stroke="#fff" stroke-width="2.1" fill="none" stroke-linecap="butt" stroke-linejoin="miter"/></svg></div>
<div class="t lk" style="left:14px;top:604px"><span style='letter-spacing:0.050px'>Measure</span></div>
<div class="ab" style="left:352px;top:606px"><svg class="cb" width="13" height="13" viewBox="0 0 13 13"><rect x="0" y="0" width="13" height="13" rx="2.2" fill="#737373"/><path d="M2.4 6.8 L5.3 9.7 L10.3 2.7" stroke="#fff" stroke-width="2.1" fill="none" stroke-linecap="butt" stroke-linejoin="miter"/></svg></div>
<div class="ab" style="left:454px;top:606px"><svg class="cb" width="13" height="13" viewBox="0 0 13 13"><rect x="0" y="0" width="13" height="13" rx="2.2" fill="#737373"/><path d="M2.4 6.8 L5.3 9.7 L10.3 2.7" stroke="#fff" stroke-width="2.1" fill="none" stroke-linecap="butt" stroke-linejoin="miter"/></svg></div>
<div class="ab" style="left:547px;top:606px"><svg class="cb" width="13" height="13" viewBox="0 0 13 13"><rect x="0" y="0" width="13" height="13" rx="2.2" fill="#737373"/><path d="M2.4 6.8 L5.3 9.7 L10.3 2.7" stroke="#fff" stroke-width="2.1" fill="none" stroke-linecap="butt" stroke-linejoin="miter"/></svg></div>
<div class="ab" style="left:636px;top:606px"><svg class="cb" width="13" height="13" viewBox="0 0 13 13"><rect x="0" y="0" width="13" height="13" rx="2.2" fill="#737373"/><path d="M2.4 6.8 L5.3 9.7 L10.3 2.7" stroke="#fff" stroke-width="2.1" fill="none" stroke-linecap="butt" stroke-linejoin="miter"/></svg></div>
<div class="ab" style="left:755px;top:606px"><svg class="cb" width="13" height="13" viewBox="0 0 13 13"><rect x="0" y="0" width="13" height="13" rx="2.2" fill="#737373"/><path d="M2.4 6.8 L5.3 9.7 L10.3 2.7" stroke="#fff" stroke-width="2.1" fill="none" stroke-linecap="butt" stroke-linejoin="miter"/></svg></div>
<div class="ab" style="left:840px;top:608px"><svg class="pl" width="10" height="10" viewBox="0 0 10 10"><path d="M3.75 0h2.5v3.75H10v2.5H6.25V10H3.75V6.25H0V3.75h3.75z" fill="#44b35e"/></svg></div>
<div class="t ar" style="left:855px;top:604px">Add restriction</div>
<div class="t tx" style="left:1083px;top:604px"><span style='letter-spacing:0.300px'>Tag Activation</span></div>
<div class="ab" style="left:1523px;top:606px"><svg class="cb" width="13" height="13" viewBox="0 0 13 13"><rect x="0" y="0" width="13" height="13" rx="2.2" fill="#737373"/><path d="M2.4 6.8 L5.3 9.7 L10.3 2.7" stroke="#fff" stroke-width="2.1" fill="none" stroke-linecap="butt" stroke-linejoin="miter"/></svg></div>
<div class="t lk" style="left:14px;top:635px"><span style='letter-spacing:-0.090px'>DHFLineItem</span></div>
<div class="ab" style="left:352px;top:637px"><svg class="cb" width="13" height="13" viewBox="0 0 13 13"><rect x="0" y="0" width="13" height="13" rx="2.2" fill="#737373"/><path d="M2.4 6.8 L5.3 9.7 L10.3 2.7" stroke="#fff" stroke-width="2.1" fill="none" stroke-linecap="butt" stroke-linejoin="miter"/></svg></div>
<div class="ab" style="left:454px;top:637px"><svg class="cb" width="13" height="13" viewBox="0 0 13 13"><rect x="0" y="0" width="13" height="13" rx="2.2" fill="#737373"/><path d="M2.4 6.8 L5.3 9.7 L10.3 2.7" stroke="#fff" stroke-width="2.1" fill="none" stroke-linecap="butt" stroke-linejoin="miter"/></svg></div>
<div class="ab" style="left:547px;top:637px"><svg class="cb" width="13" height="13" viewBox="0 0 13 13"><rect x="0" y="0" width="13" height="13" rx="2.2" fill="#737373"/><path d="M2.4 6.8 L5.3 9.7 L10.3 2.7" stroke="#fff" stroke-width="2.1" fill="none" stroke-linecap="butt" stroke-linejoin="miter"/></svg></div>
<div class="ab" style="left:636px;top:637px"><svg class="cb" width="13" height="13" viewBox="0 0 13 13"><rect x="0" y="0" width="13" height="13" rx="2.2" fill="#737373"/><path d="M2.4 6.8 L5.3 9.7 L10.3 2.7" stroke="#fff" stroke-width="2.1" fill="none" stroke-linecap="butt" stroke-linejoin="miter"/></svg></div>
<div class="ab" style="left:755px;top:637px"><svg class="cb" width="13" height="13" viewBox="0 0 13 13"><rect x="0" y="0" width="13" height="13" rx="2.2" fill="#737373"/><path d="M2.4 6.8 L5.3 9.7 L10.3 2.7" stroke="#fff" stroke-width="2.1" fill="none" stroke-linecap="butt" stroke-linejoin="miter"/></svg></div>
<div class="ab" style="left:840px;top:639px"><svg class="pl" width="10" height="10" viewBox="0 0 10 10"><path d="M3.75 0h2.5v3.75H10v2.5H6.25V10H3.75V6.25H0V3.75h3.75z" fill="#44b35e"/></svg></div>
<div class="t ar" style="left:855px;top:635px">Add restriction</div>
<div class="t tx" style="left:1083px;top:635px"><span style='letter-spacing:0.023px'>Tag Management</span></div>
<div class="ab" style="left:1523px;top:637px"><svg class="cb" width="13" height="13" viewBox="0 0 13 13"><rect x="0" y="0" width="13" height="13" rx="2.2" fill="#737373"/><path d="M2.4 6.8 L5.3 9.7 L10.3 2.7" stroke="#fff" stroke-width="2.1" fill="none" stroke-linecap="butt" stroke-linejoin="miter"/></svg></div>
<div class="t lk" style="left:14px;top:666px"><span style='letter-spacing:0.087px'>Assistant Report</span></div>
<div class="ab" style="left:352px;top:668px"><svg class="cb" width="13" height="13" viewBox="0 0 13 13"><rect x="0" y="0" width="13" height="13" rx="2.2" fill="#737373"/><path d="M2.4 6.8 L5.3 9.7 L10.3 2.7" stroke="#fff" stroke-width="2.1" fill="none" stroke-linecap="butt" stroke-linejoin="miter"/></svg></div>
<div class="ab" style="left:454px;top:668px"><svg class="cb" width="13" height="13" viewBox="0 0 13 13"><rect x="0" y="0" width="13" height="13" rx="2.2" fill="#737373"/><path d="M2.4 6.8 L5.3 9.7 L10.3 2.7" stroke="#fff" stroke-width="2.1" fill="none" stroke-linecap="butt" stroke-linejoin="miter"/></svg></div>
<div class="ab" style="left:547px;top:668px"><svg class="cb" width="13" height="13" viewBox="0 0 13 13"><rect x="0" y="0" width="13" height="13" rx="2.2" fill="#737373"/><path d="M2.4 6.8 L5.3 9.7 L10.3 2.7" stroke="#fff" stroke-width="2.1" fill="none" stroke-linecap="butt" stroke-linejoin="miter"/></svg></div>
<div class="ab" style="left:636px;top:668px"><svg class="cb" width="13" height="13" viewBox="0 0 13 13"><rect x="0" y="0" width="13" height="13" rx="2.2" fill="#737373"/><path d="M2.4 6.8 L5.3 9.7 L10.3 2.7" stroke="#fff" stroke-width="2.1" fill="none" stroke-linecap="butt" stroke-linejoin="miter"/></svg></div>
<div class="ab" style="left:755px;top:668px"><svg class="cb" width="13" height="13" viewBox="0 0 13 13"><rect x="0" y="0" width="13" height="13" rx="2.2" fill="#737373"/><path d="M2.4 6.8 L5.3 9.7 L10.3 2.7" stroke="#fff" stroke-width="2.1" fill="none" stroke-linecap="butt" stroke-linejoin="miter"/></svg></div>
<div class="ab" style="left:840px;top:670px"><svg class="pl" width="10" height="10" viewBox="0 0 10 10"><path d="M3.75 0h2.5v3.75H10v2.5H6.25V10H3.75V6.25H0V3.75h3.75z" fill="#44b35e"/></svg></div>
<div class="t ar" style="left:855px;top:666px">Add restriction</div>
<div class="t tx" style="left:1083px;top:666px"><span style='letter-spacing:0.011px'>Test Run Explorer Management</span></div>
<div class="ab" style="left:1523px;top:668px"><svg class="cb" width="13" height="13" viewBox="0 0 13 13"><rect x="0" y="0" width="13" height="13" rx="2.2" fill="#737373"/><path d="M2.4 6.8 L5.3 9.7 L10.3 2.7" stroke="#fff" stroke-width="2.1" fill="none" stroke-linecap="butt" stroke-linejoin="miter"/></svg></div>
<div class="t lk" style="left:14px;top:697px"><span style='letter-spacing:-0.220px'>Review</span></div>
<div class="ab" style="left:352px;top:699px"><svg class="cb" width="13" height="13" viewBox="0 0 13 13"><rect x="0" y="0" width="13" height="13" rx="2.2" fill="#737373"/><path d="M2.4 6.8 L5.3 9.7 L10.3 2.7" stroke="#fff" stroke-width="2.1" fill="none" stroke-linecap="butt" stroke-linejoin="miter"/></svg></div>
<div class="ab" style="left:454px;top:699px"><svg class="cb" width="13" height="13" viewBox="0 0 13 13"><rect x="0" y="0" width="13" height="13" rx="2.2" fill="#737373"/><path d="M2.4 6.8 L5.3 9.7 L10.3 2.7" stroke="#fff" stroke-width="2.1" fill="none" stroke-linecap="butt" stroke-linejoin="miter"/></svg></div>
<div class="ab" style="left:547px;top:699px"><svg class="cb" width="13" height="13" viewBox="0 0 13 13"><rect x="0" y="0" width="13" height="13" rx="2.2" fill="#737373"/><path d="M2.4 6.8 L5.3 9.7 L10.3 2.7" stroke="#fff" stroke-width="2.1" fill="none" stroke-linecap="butt" stroke-linejoin="miter"/></svg></div>
<div class="ab" style="left:636px;top:699px"><svg class="cb" width="13" height="13" viewBox="0 0 13 13"><rect x="0" y="0" width="13" height="13" rx="2.2" fill="#737373"/><path d="M2.4 6.8 L5.3 9.7 L10.3 2.7" stroke="#fff" stroke-width="2.1" fill="none" stroke-linecap="butt" stroke-linejoin="miter"/></svg></div>
<div class="ab" style="left:755px;top:699px"><svg class="cb" width="13" height="13" viewBox="0 0 13 13"><rect x="0" y="0" width="13" height="13" rx="2.2" fill="#737373"/><path d="M2.4 6.8 L5.3 9.7 L10.3 2.7" stroke="#fff" stroke-width="2.1" fill="none" stroke-linecap="butt" stroke-linejoin="miter"/></svg></div>
<div class="ab" style="left:840px;top:701px"><svg class="pl" width="10" height="10" viewBox="0 0 10 10"><path d="M3.75 0h2.5v3.75H10v2.5H6.25V10H3.75V6.25H0V3.75h3.75z" fill="#44b35e"/></svg></div>
<div class="t ar" style="left:855px;top:697px">Add restriction</div>
<div class="t tx" style="left:1083px;top:697px"><span style='letter-spacing:0.000px'>Test Run Management</span></div>
<div class="ab" style="left:1523px;top:699px"><svg class="cb" width="13" height="13" viewBox="0 0 13 13"><rect x="0" y="0" width="13" height="13" rx="2.2" fill="#737373"/><path d="M2.4 6.8 L5.3 9.7 L10.3 2.7" stroke="#fff" stroke-width="2.1" fill="none" stroke-linecap="butt" stroke-linejoin="miter"/></svg></div>
<div class="t lk" style="left:14px;top:728px"><span style='letter-spacing:0.094px'>ProbabilityOfHarm</span></div>
<div class="ab" style="left:352px;top:730px"><svg class="cb" width="13" height="13" viewBox="0 0 13 13"><rect x="0" y="0" width="13" height="13" rx="2.2" fill="#737373"/><path d="M2.4 6.8 L5.3 9.7 L10.3 2.7" stroke="#fff" stroke-width="2.1" fill="none" stroke-linecap="butt" stroke-linejoin="miter"/></svg></div>
<div class="ab" style="left:454px;top:730px"><svg class="cb" width="13" height="13" viewBox="0 0 13 13"><rect x="0" y="0" width="13" height="13" rx="2.2" fill="#737373"/><path d="M2.4 6.8 L5.3 9.7 L10.3 2.7" stroke="#fff" stroke-width="2.1" fill="none" stroke-linecap="butt" stroke-linejoin="miter"/></svg></div>
<div class="ab" style="left:547px;top:730px"><svg class="cb" width="13" height="13" viewBox="0 0 13 13"><rect x="0" y="0" width="13" height="13" rx="2.2" fill="#737373"/><path d="M2.4 6.8 L5.3 9.7 L10.3 2.7" stroke="#fff" stroke-width="2.1" fill="none" stroke-linecap="butt" stroke-linejoin="miter"/></svg></div>
<div class="ab" style="left:636px;top:730px"><svg class="cb" width="13" height="13" viewBox="0 0 13 13"><rect x="0" y="0" width="13" height="13" rx="2.2" fill="#737373"/><path d="M2.4 6.8 L5.3 9.7 L10.3 2.7" stroke="#fff" stroke-width="2.1" fill="none" stroke-linecap="butt" stroke-linejoin="miter"/></svg></div>
<div class="ab" style="left:755px;top:730px"><svg class="cb" width="13" height="13" viewBox="0 0 13 13"><rect x="0" y="0" width="13" height="13" rx="2.2" fill="#737373"/><path d="M2.4 6.8 L5.3 9.7 L10.3 2.7" stroke="#fff" stroke-width="2.1" fill="none" stroke-linecap="butt" stroke-linejoin="miter"/></svg></div>
<div class="ab" style="left:840px;top:732px"><svg class="pl" width="10" height="10" viewBox="0 0 10 10"><path d="M3.75 0h2.5v3.75H10v2.5H6.25V10H3.75V6.25H0V3.75h3.75z" fill="#44b35e"/></svg></div>
<div class="t ar" style="left:855px;top:728px">Add restriction</div>
<div class="t tx" style="left:1083px;top:728px"><span style='letter-spacing:-0.021px'>Trace Explorer Management</span></div>
<div class="ab" style="left:1523px;top:730px"><svg class="cb" width="13" height="13" viewBox="0 0 13 13"><rect x="0" y="0" width="13" height="13" rx="2.2" fill="#737373"/><path d="M2.4 6.8 L5.3 9.7 L10.3 2.7" stroke="#fff" stroke-width="2.1" fill="none" stroke-linecap="butt" stroke-linejoin="miter"/></svg></div>
<div class="t lk" style="left:14px;top:759px"><span style='letter-spacing:0.000px'>Issue</span></div>
<div class="ab" style="left:352px;top:761px"><svg class="cb" width="13" height="13" viewBox="0 0 13 13"><rect x="0" y="0" width="13" height="13" rx="2.2" fill="#737373"/><path d="M2.4 6.8 L5.3 9.7 L10.3 2.7" stroke="#fff" stroke-width="2.1" fill="none" stroke-linecap="butt" stroke-linejoin="miter"/></svg></div>
<div class="ab" style="left:454px;top:761px"><svg class="cb" width="13" height="13" viewBox="0 0 13 13"><rect x="0" y="0" width="13" height="13" rx="2.2" fill="#737373"/><path d="M2.4 6.8 L5.3 9.7 L10.3 2.7" stroke="#fff" stroke-width="2.1" fill="none" stroke-linecap="butt" stroke-linejoin="miter"/></svg></div>
<div class="ab" style="left:547px;top:761px"><svg class="cb" width="13" height="13" viewBox="0 0 13 13"><rect x="0" y="0" width="13" height="13" rx="2.2" fill="#737373"/><path d="M2.4 6.8 L5.3 9.7 L10.3 2.7" stroke="#fff" stroke-width="2.1" fill="none" stroke-linecap="butt" stroke-linejoin="miter"/></svg></div>
<div class="ab" style="left:636px;top:761px"><svg class="cb" width="13" height="13" viewBox="0 0 13 13"><rect x="0" y="0" width="13" height="13" rx="2.2" fill="#737373"/><path d="M2.4 6.8 L5.3 9.7 L10.3 2.7" stroke="#fff" stroke-width="2.1" fill="none" stroke-linecap="butt" stroke-linejoin="miter"/></svg></div>
<div class="ab" style="left:755px;top:761px"><svg class="cb" width="13" height="13" viewBox="0 0 13 13"><rect x="0" y="0" width="13" height="13" rx="2.2" fill="#737373"/><path d="M2.4 6.8 L5.3 9.7 L10.3 2.7" stroke="#fff" stroke-width="2.1" fill="none" stroke-linecap="butt" stroke-linejoin="miter"/></svg></div>
<div class="ab" style="left:840px;top:763px"><svg class="pl" width="10" height="10" viewBox="0 0 10 10"><path d="M3.75 0h2.5v3.75H10v2.5H6.25V10H3.75V6.25H0V3.75h3.75z" fill="#44b35e"/></svg></div>
<div class="t ar" style="left:855px;top:759px">Add restriction</div>
<div class="t tx" style="left:1083px;top:759px"><span style='letter-spacing:0.095px'>Trace Table Management</span></div>
<div class="ab" style="left:1523px;top:761px"><svg class="cb" width="13" height="13" viewBox="0 0 13 13"><rect x="0" y="0" width="13" height="13" rx="2.2" fill="#737373"/><path d="M2.4 6.8 L5.3 9.7 L10.3 2.7" stroke="#fff" stroke-width="2.1" fill="none" stroke-linecap="butt" stroke-linejoin="miter"/></svg></div>
<div class="t lk" style="left:14px;top:790px"><span style='letter-spacing:0.256px'>Attachment</span></div>
<div class="ab" style="left:352px;top:792px"><svg class="cb" width="13" height="13" viewBox="0 0 13 13"><rect x="0" y="0" width="13" height="13" rx="2.2" fill="#737373"/><path d="M2.4 6.8 L5.3 9.7 L10.3 2.7" stroke="#fff" stroke-width="2.1" fill="none" stroke-linecap="butt" stroke-linejoin="miter"/></svg></div>
<div class="ab" style="left:454px;top:792px"><svg class="cb" width="13" height="13" viewBox="0 0 13 13"><rect x="0" y="0" width="13" height="13" rx="2.2" fill="#737373"/><path d="M2.4 6.8 L5.3 9.7 L10.3 2.7" stroke="#fff" stroke-width="2.1" fill="none" stroke-linecap="butt" stroke-linejoin="miter"/></svg></div>
<div class="ab" style="left:547px;top:792px"><svg class="cb" width="13" height="13" viewBox="0 0 13 13"><rect x="0" y="0" width="13" height="13" rx="2.2" fill="#737373"/><path d="M2.4 6.8 L5.3 9.7 L10.3 2.7" stroke="#fff" stroke-width="2.1" fill="none" stroke-linecap="butt" stroke-linejoin="miter"/></svg></div>
<div class="ab" style="left:636px;top:792px"><svg class="cb" width="13" height="13" viewBox="0 0 13 13"><rect x="0" y="0" width="13" height="13" rx="2.2" fill="#737373"/><path d="M2.4 6.8 L5.3 9.7 L10.3 2.7" stroke="#fff" stroke-width="2.1" fill="none" stroke-linecap="butt" stroke-linejoin="miter"/></svg></div>
<div class="ab" style="left:755px;top:792px"><svg class="cb" width="13" height="13" viewBox="0 0 13 13"><rect x="0" y="0" width="13" height="13" rx="2.2" fill="#737373"/><path d="M2.4 6.8 L5.3 9.7 L10.3 2.7" stroke="#fff" stroke-width="2.1" fill="none" stroke-linecap="butt" stroke-linejoin="miter"/></svg></div>
<div class="ab" style="left:840px;top:794px"><svg class="pl" width="10" height="10" viewBox="0 0 10 10"><path d="M3.75 0h2.5v3.75H10v2.5H6.25V10H3.75V6.25H0V3.75h3.75z" fill="#44b35e"/></svg></div>
<div class="t ar" style="left:855px;top:790px">Add restriction</div>
<div class="t tx" style="left:1083px;top:790px"><span style='letter-spacing:0.021px'>User Management</span></div>
<div class="ab" style="left:1523px;top:792px"><svg class="cb" width="13" height="13" viewBox="0 0 13 13"><rect x="0" y="0" width="13" height="13" rx="2.2" fill="#737373"/><path d="M2.4 6.8 L5.3 9.7 L10.3 2.7" stroke="#fff" stroke-width="2.1" fill="none" stroke-linecap="butt" stroke-linejoin="miter"/></svg></div>
<div class="t lk" style="left:14px;top:821px"><span style='letter-spacing:0.000px'>Complaint</span></div>
<div class="ab" style="left:352px;top:823px"><svg class="cb" width="13" height="13" viewBox="0 0 13 13"><rect x="0" y="0" width="13" height="13" rx="2.2" fill="#737373"/><path d="M2.4 6.8 L5.3 9.7 L10.3 2.7" stroke="#fff" stroke-width="2.1" fill="none" stroke-linecap="butt" stroke-linejoin="miter"/></svg></div>
<div class="ab" style="left:454px;top:823px"><svg class="cb" width="13" height="13" viewBox="0 0 13 13"><rect x="0" y="0" width="13" height="13" rx="2.2" fill="#737373"/><path d="M2.4 6.8 L5.3 9.7 L10.3 2.7" stroke="#fff" stroke-width="2.1" fill="none" stroke-linecap="butt" stroke-linejoin="miter"/></svg></div>
<div class="ab" style="left:547px;top:823px"><svg class="cb" width="13" height="13" viewBox="0 0 13 13"><rect x="0" y="0" width="13" height="13" rx="2.2" fill="#737373"/><path d="M2.4 6.8 L5.3 9.7 L10.3 2.7" stroke="#fff" stroke-width="2.1" fill="none" stroke-linecap="butt" stroke-linejoin="miter"/></svg></div>
<div class="ab" style="left:636px;top:823px"><svg class="cb" width="13" height="13" viewBox="0 0 13 13"><rect x="0" y="0" width="13" height="13" rx="2.2" fill="#737373"/><path d="M2.4 6.8 L5.3 9.7 L10.3 2.7" stroke="#fff" stroke-width="2.1" fill="none" stroke-linecap="butt" stroke-linejoin="miter"/></svg></div>
<div class="ab" style="left:755px;top:823px"><svg class="cb" width="13" height="13" viewBox="0 0 13 13"><rect x="0" y="0" width="13" height="13" rx="2.2" fill="#737373"/><path d="M2.4 6.8 L5.3 9.7 L10.3 2.7" stroke="#fff" stroke-width="2.1" fill="none" stroke-linecap="butt" stroke-linejoin="miter"/></svg></div>
<div class="ab" style="left:840px;top:825px"><svg class="pl" width="10" height="10" viewBox="0 0 10 10"><path d="M3.75 0h2.5v3.75H10v2.5H6.25V10H3.75V6.25H0V3.75h3.75z" fill="#44b35e"/></svg></div>
<div class="t ar" style="left:855px;top:821px">Add restriction</div>
<div class="t tx" style="left:1083px;top:821px"><span style='letter-spacing:0.000px'>Workflow Management</span></div>
<div class="ab" style="left:1523px;top:823px"><svg class="cb" width="13" height="13" viewBox="0 0 13 13"><rect x="0" y="0" width="13" height="13" rx="2.2" fill="#737373"/><path d="M2.4 6.8 L5.3 9.7 L10.3 2.7" stroke="#fff" stroke-width="2.1" fill="none" stroke-linecap="butt" stroke-linejoin="miter"/></svg></div>
</body></html>
